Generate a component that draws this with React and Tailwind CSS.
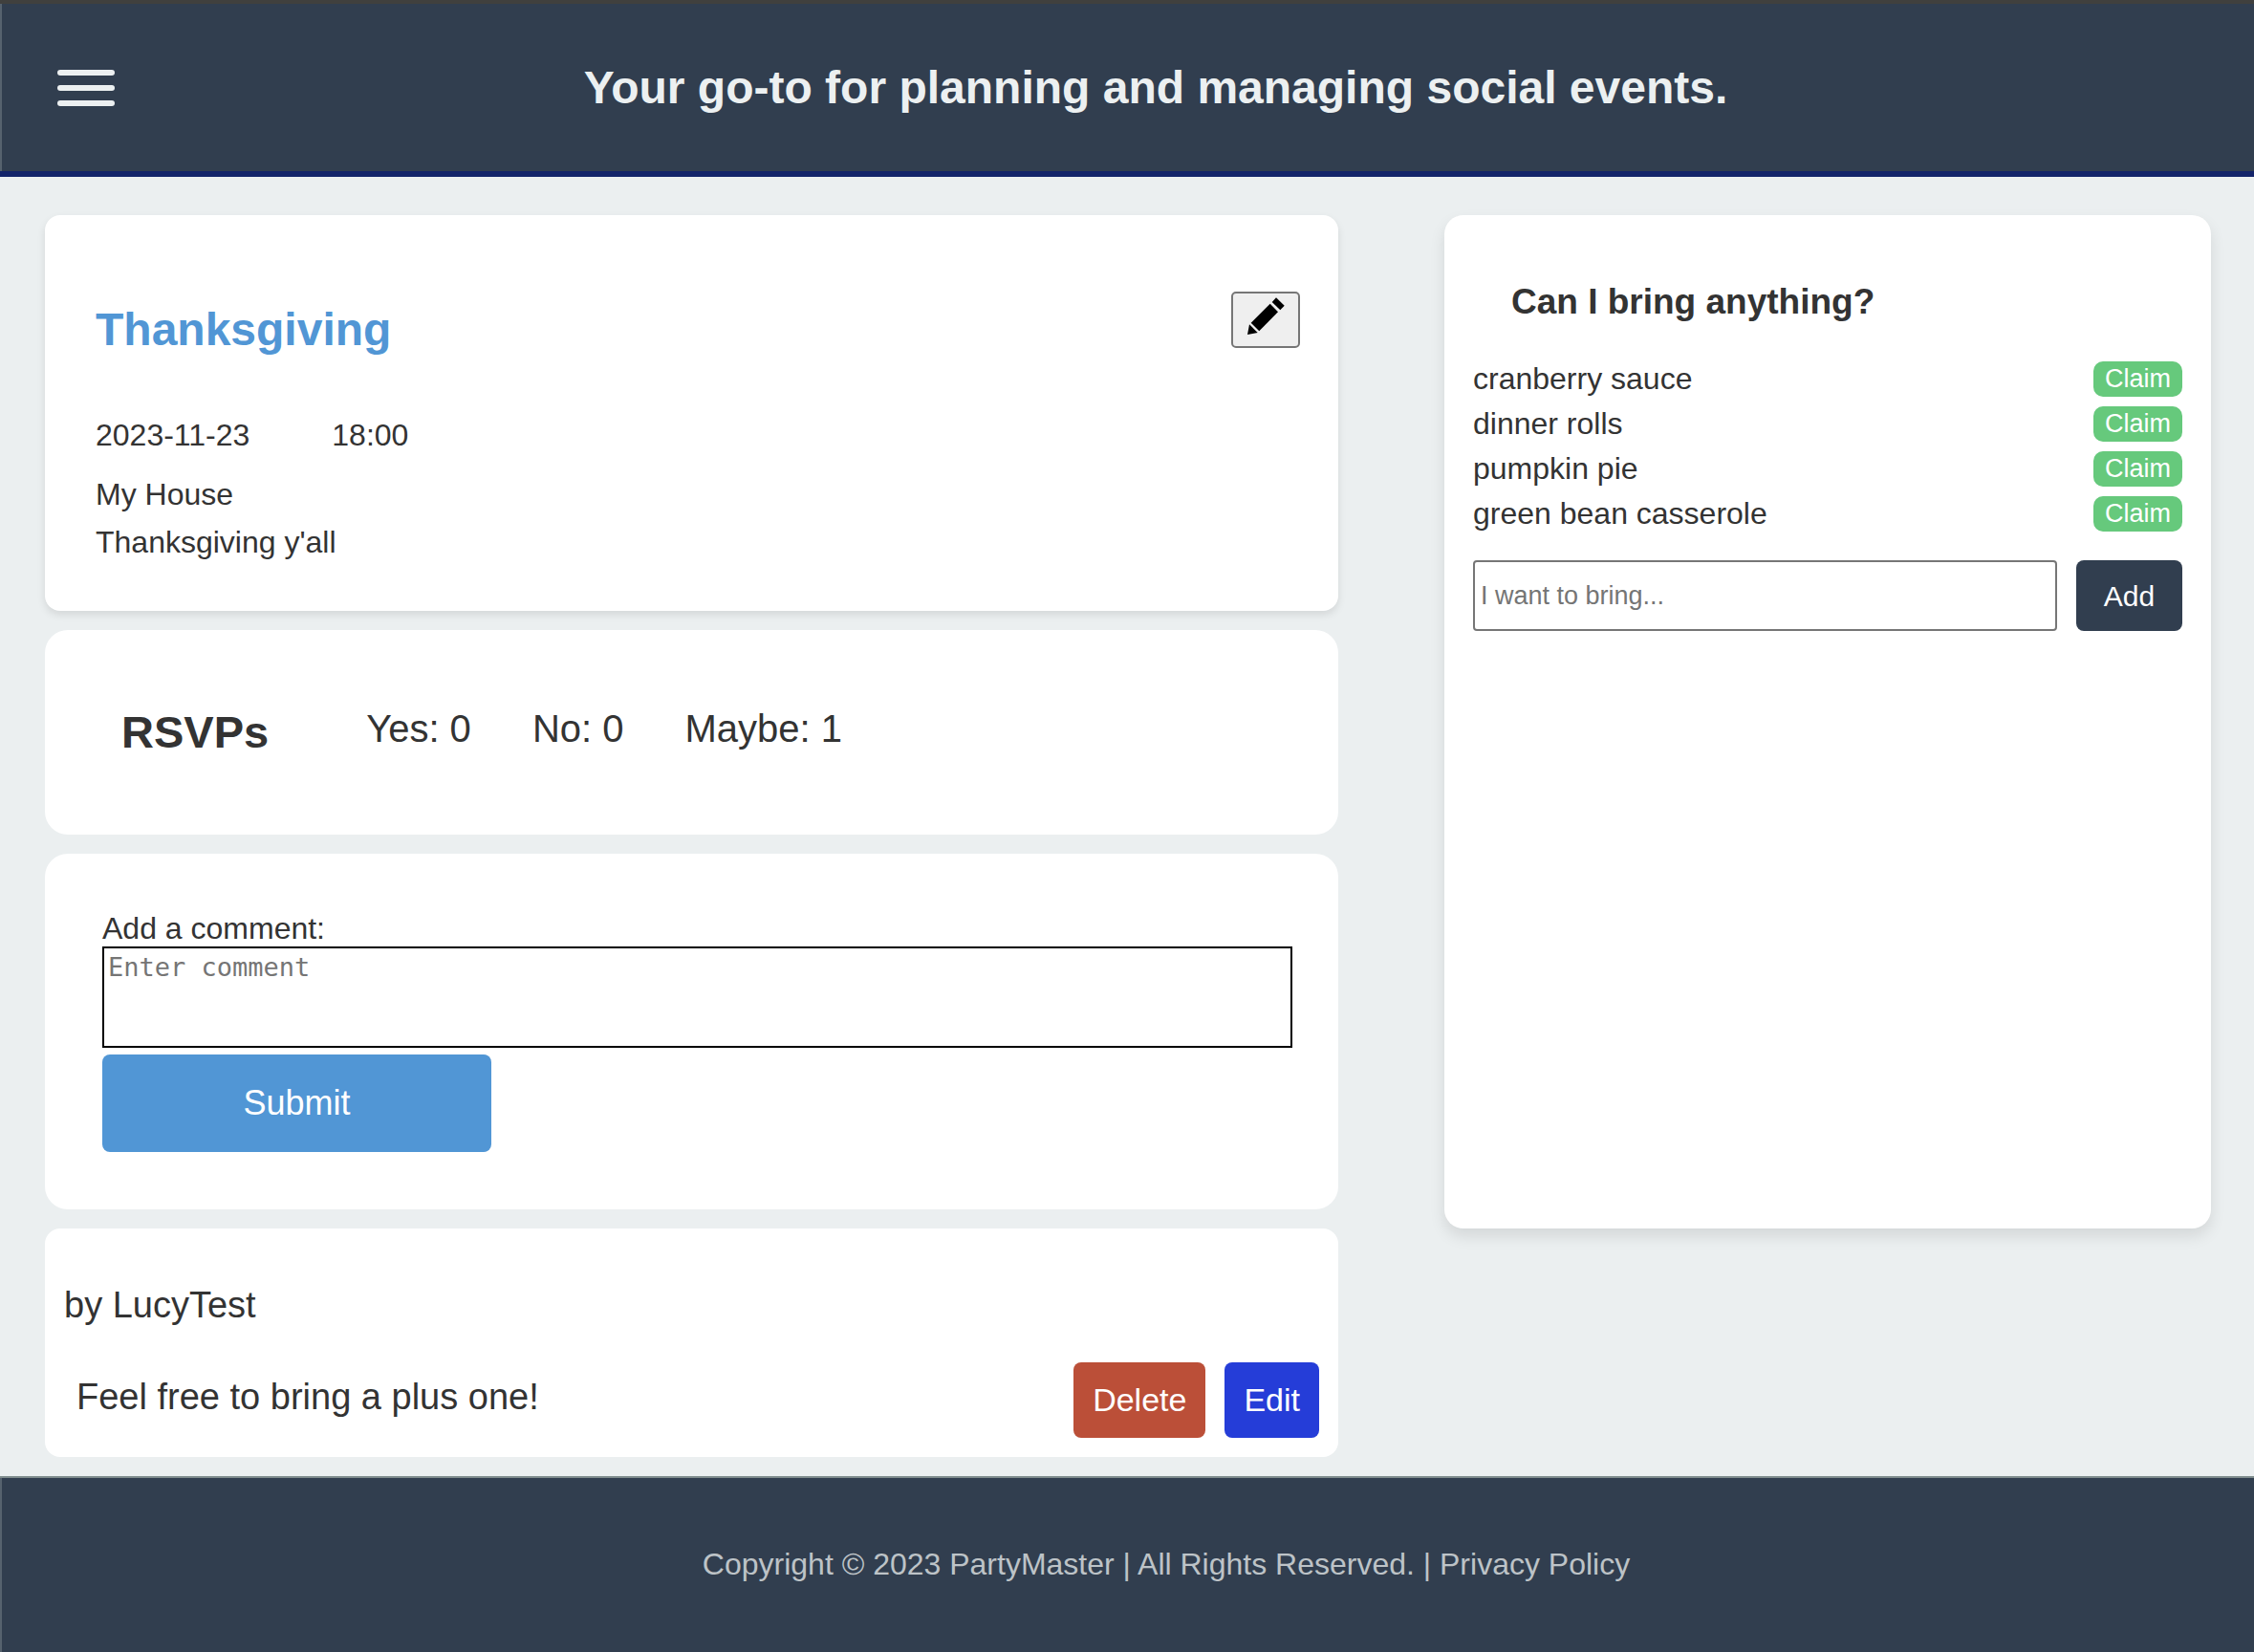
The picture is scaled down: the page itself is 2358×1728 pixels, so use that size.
const items = ["cranberry sauce", "dinner rolls", "pumpkin pie", "green bean casserole"];

function PencilIcon() {
  return (
    <svg viewBox="0 0 40 40" className="h-10 w-10" fill="#000" aria-hidden="true">
      <path d="M31 .3 39.7 8.7 35.3 13.3 26.7 5z" />
      <path d="M24.7 6.7 33 15.3 13.3 35.3 4.7 26.7z" />
      <path d="M3 28.3 11.7 37 1 39z" />
    </svg>
  );
}

function Header() {
  return (
    <header className="border-t-4 border-b-6 border-t-[#40403e] border-b-[#13246a] bg-[#313e4f]">
      <div className="flex items-center border-l-2 border-[#56626e] py-[59px] pr-[60px] pl-[58px]">
        <button type="button" aria-label="Open menu" className="flex w-[60px] flex-col gap-[10px]">
          <span className="h-[6px] rounded-[3px] bg-[#ecf0f1]" />
          <span className="h-[6px] rounded-[3px] bg-[#ecf0f1]" />
          <span className="h-[6px] rounded-[3px] bg-[#ecf0f1]" />
        </button>
        <h1 className="flex-1 text-center text-[48px] leading-[57px] font-bold text-[#ecf0f1]">
          Your go-to for planning and managing social events.
        </h1>
      </div>
    </header>
  );
}

function EventCard() {
  return (
    <section className="rounded-2xl bg-white pt-20 pr-10 pb-[47px] pl-[53px] shadow-[0_4px_8px_rgba(0,0,0,0.1)]">
      <div className="flex items-start justify-between">
        <h2 className="pt-3 text-[48px] leading-[56px] font-bold text-[#5196d5]">Thanksgiving</h2>
        <button
          type="button"
          aria-label="Edit event"
          className="flex h-[59px] w-[72px] justify-center rounded-[5px] border-2 border-[#767676] bg-[#efefef] pt-1"
        >
          <PencilIcon />
        </button>
      </div>
      <div className="mt-[64px] flex gap-[86px] leading-[37px]">
        <time>2023-11-23</time>
        <time>18:00</time>
      </div>
      <p className="mt-[18px] leading-[50px]">My House</p>
      <p className="leading-[50px]">Thanksgiving y'all</p>
    </section>
  );
}

function Rsvps() {
  return (
    <section className="flex gap-[102px] rounded-3xl bg-white py-[79px] pl-[80px]">
      <h2 className="text-[47px] leading-[56px] font-bold">RSVPs</h2>
      <ul className="flex gap-16 text-[40px] leading-[48px]">
        <li>Yes: 0</li>
        <li>No: 0</li>
        <li>Maybe: 1</li>
      </ul>
    </section>
  );
}

function CommentForm() {
  return (
    <form className="rounded-3xl bg-white py-[60px] pr-12 pl-[60px]" onSubmit={(e) => e.preventDefault()}>
      <label htmlFor="comment" className="block leading-[37px]">
        Add a comment:
      </label>
      <textarea
        id="comment"
        placeholder="Enter comment"
        className="block h-[106px] w-full resize-none border-2 border-black px-1 py-1 font-['DejaVu_Sans_Mono',monospace] text-[27px] leading-[32px] placeholder:text-[#757575]"
      />
      <button type="submit" className="mt-[7px] block h-[102px] w-[407px] rounded-lg bg-[#5196d5] text-[36px] text-white">
        Submit
      </button>
    </form>
  );
}

function Comment() {
  return (
    <article className="rounded-2xl bg-white px-5 pt-14 pb-5">
      <p className="text-[38px] leading-[48px]">by LucyTest</p>
      <div className="mt-9 flex items-start gap-5 text-[34px] text-white">
        <p className="flex-1 pt-3 pl-[13px] text-[38px] leading-[48px] text-[#333]">Feel free to bring a plus one!</p>
        <button type="button" className="rounded-lg bg-[#bb4f38] px-5 py-5 leading-[39px]">
          Delete
        </button>
        <button type="button" className="rounded-lg bg-[#253dd8] px-5 py-5 leading-[39px]">
          Edit
        </button>
      </div>
    </article>
  );
}

function BringList() {
  return (
    <aside className="min-h-[1060px] self-start rounded-[20px] bg-white px-[30px] pt-[69px] shadow-[0_8px_16px_rgba(0,0,0,0.1)]">
      <h3 className="pl-10 text-[37px] leading-[44px] font-bold">Can I bring anything?</h3>
      <ul className="mt-[40px] flex flex-col gap-[10px]">
        {items.map((item) => (
          <li key={item} className="flex items-center justify-between leading-[37px]">
            {item}
            <button type="button" className="rounded-[10px] bg-[#66c97c] px-3 text-[27px] leading-[37px] text-white">
              Claim
            </button>
          </li>
        ))}
      </ul>
      <form className="mt-[30px] flex gap-5" onSubmit={(e) => e.preventDefault()}>
        <input
          type="text"
          aria-label="I want to bring"
          placeholder="I want to bring..."
          className="h-[74px] min-w-0 flex-1 rounded border-2 border-[#767676] px-[6px] text-[27px] placeholder:text-[#757575]"
        />
        <button type="submit" className="w-[111px] rounded-lg bg-[#313e4f] text-[30px] text-white">
          Add
        </button>
      </form>
    </aside>
  );
}

export default function App() {
  return (
    <div className="flex min-h-screen flex-col bg-[#ebeff0] font-['Liberation_Sans',Arial,sans-serif] text-[32px] text-[#333]">
      <Header />
      <main className="grid grid-cols-[1353fr_802fr] gap-[111px] pt-10 pr-[45px] pb-5 pl-[47px]">
        <div className="flex flex-col gap-5">
          <EventCard />
          <Rsvps />
          <CommentForm />
          <Comment />
        </div>
        <BringList />
      </main>
      <footer className="flex flex-1 flex-col border-t-2 border-[#7f8c8d] bg-[#313e4f]">
        <p className="flex-1 border-l-2 border-[#56626e] pt-[72px] pr-10 pb-[72px] pl-[120px] text-center leading-[37px] text-[#bdc3c7]">
          Copyright © 2023 PartyMaster | All Rights Reserved. | <a href="#privacy">Privacy Policy</a>
        </p>
      </footer>
    </div>
  );
}
